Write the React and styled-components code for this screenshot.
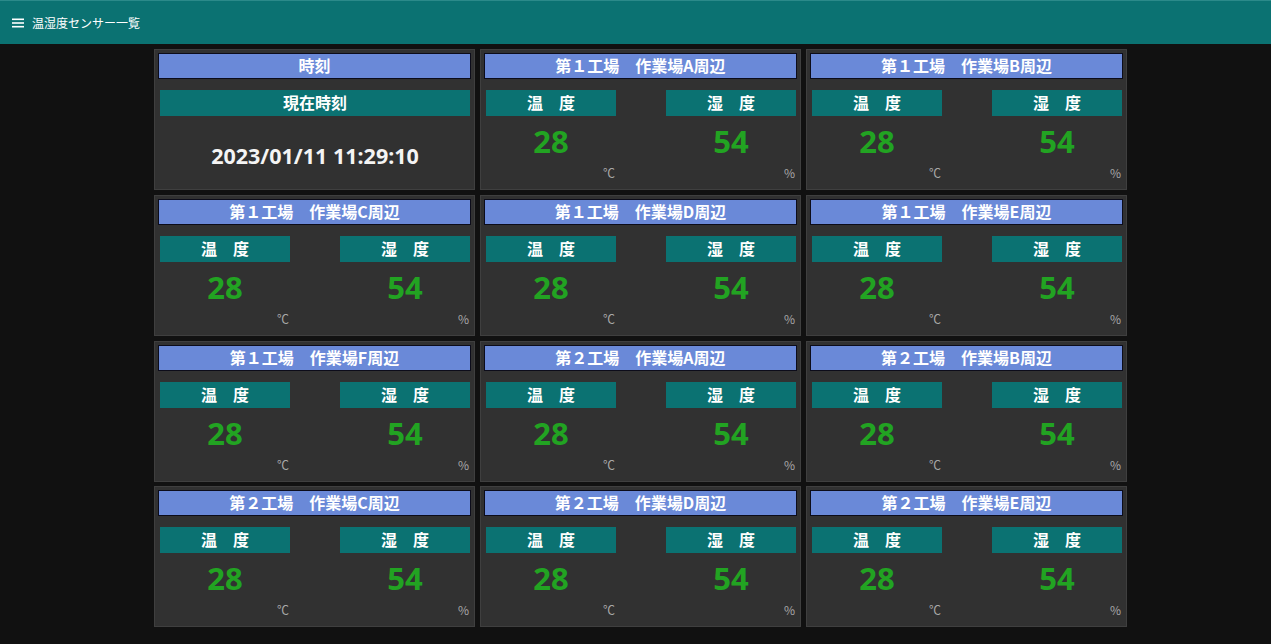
import React from "react";
import styled, { createGlobalStyle } from "styled-components";

const Global = createGlobalStyle`
  html, body { margin: 0; padding: 0; background: #111111; }
  body { font-family: "Noto Sans", "Noto Sans CJK JP", sans-serif; }
  * { box-sizing: border-box; }
`;

const Page = styled.div`
  width: 1271px;
  height: 644px;
  background: #111111;
  overflow: hidden;
`;

const Header = styled.header`
  height: 44px;
  background: #0b7272;
  border-top: 1px solid #2b8a8a;
  display: flex;
  align-items: center;
  padding-left: 12px;
  gap: 8px;
  color: #ffffff;
`;

const HeaderTitle = styled.span`
  font-family: "Noto Sans CJK JP", sans-serif;
  font-size: 12px;
  line-height: 1;
  padding-top: 1px;
`;

const Main = styled.main`
  display: flex;
  justify-content: center;
  padding: 5px 0 0 10px;
`;

const Grid = styled.div`
  display: grid;
  grid-template-columns: repeat(3, 321px);
  grid-auto-rows: 141px;
  column-gap: 5px;
  row-gap: 4.8px;
`;

const Card = styled.section`
  background: #313131;
  border: 1px solid #3f3f3f;
  padding: 3px 3px 0 3px;
  display: flex;
  flex-direction: column;
`;

const TitleBar = styled.div`
  height: 26px;
  background: #6a89d8;
  border: 1px solid #0c0c1a;
  color: #ffffff;
  font-family: "Noto Sans CJK JP", sans-serif;
  font-weight: 700;
  font-size: 16px;
  line-height: 23px;
  text-align: center;
  white-space: pre;
`;

const Label = styled.div`
  height: 26px;
  background: #0b7272;
  color: #ffffff;
  font-family: "Noto Sans CJK JP", sans-serif;
  font-weight: 700;
  font-size: 16px;
  line-height: 25px;
  text-align: center;
  white-space: pre;
`;

const Pair = styled.div`
  display: flex;
  justify-content: space-between;
  padding: 0 1px 0 2px;
  margin-top: 11px;
`;

const Column = styled.div`
  width: 130px;
  display: flex;
  flex-direction: column;
`;

const Value = styled.div`
  margin-top: 5px;
  height: 40px;
  color: #22a322;
  font-family: "Noto Sans", sans-serif;
  font-weight: 700;
  font-size: 31px;
  line-height: 40px;
  text-align: center;
`;

const Unit = styled.div`
  margin-top: 4px;
  height: 16px;
  color: #a8a8a8;
  font-family: "Noto Sans CJK JP", sans-serif;
  font-size: 12px;
  line-height: 16px;
  text-align: right;
  padding-right: 1px;
`;

const ClockBody = styled.div`
  padding: 0 1px 0 2px;
  margin-top: 11px;
  display: flex;
  flex-direction: column;
`;

const ClockText = styled.div`
  margin-top: 26px;
  color: #f4f4f4;
  font-family: "Noto Sans", sans-serif;
  font-weight: 700;
  font-size: 21.5px;
  line-height: 28px;
  text-align: center;
`;

const Menu = () => (
  <svg width="12" height="10" viewBox="0 0 12 10" fill="#ffffff">
    <rect x="0" y="0.5" width="12" height="1.6" />
    <rect x="0" y="4.2" width="12" height="1.6" />
    <rect x="0" y="7.9" width="12" height="1.6" />
  </svg>
);

const sensors = [
  "第１工場　作業場A周辺",
  "第１工場　作業場B周辺",
  "第１工場　作業場C周辺",
  "第１工場　作業場D周辺",
  "第１工場　作業場E周辺",
  "第１工場　作業場F周辺",
  "第２工場　作業場A周辺",
  "第２工場　作業場B周辺",
  "第２工場　作業場C周辺",
  "第２工場　作業場D周辺",
  "第２工場　作業場E周辺",
];

const SensorCard = ({ title }) => (
  <Card>
    <TitleBar>{title}</TitleBar>
    <Pair>
      <Column>
        <Label>{"温　度"}</Label>
        <Value>28</Value>
        <Unit>℃</Unit>
      </Column>
      <Column>
        <Label>{"湿　度"}</Label>
        <Value>54</Value>
        <Unit>%</Unit>
      </Column>
    </Pair>
  </Card>
);

export default function App() {
  return (
    <Page>
      <Global />
      <Header>
        <Menu />
        <HeaderTitle>温湿度センサー一覧</HeaderTitle>
      </Header>
      <Main>
        <Grid>
          <Card>
            <TitleBar>時刻</TitleBar>
            <ClockBody>
              <Label>現在時刻</Label>
              <ClockText>2023/01/11 11:29:10</ClockText>
            </ClockBody>
          </Card>
          {sensors.map((s) => (
            <SensorCard key={s} title={s} />
          ))}
        </Grid>
      </Main>
    </Page>
  );
}
